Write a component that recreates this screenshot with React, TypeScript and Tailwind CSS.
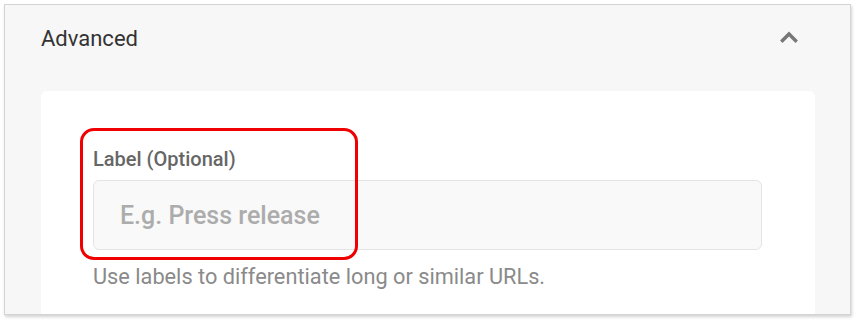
export default function App() {
  return (
    <div className="relative h-[320px] w-[856px] bg-white p-1 font-['Roboto',sans-serif]">
      {/* Panel "Advanced" */}
      <div className="h-[311px] w-[847px] overflow-hidden border border-[#d4d4d4] bg-[#f7f7f7] shadow-[1px_2px_3px_rgba(0,0,0,0.18)]">
        <div className="flex h-[86px] items-start justify-between pl-[36px] pr-[52px] pt-[20px]">
          <h2 className="text-[22px] leading-[28px] font-normal text-[#333]">Advanced</h2>
          <svg
            viewBox="0 0 18 13"
            className="mt-[5px] h-[13px] w-[18px] text-[#777]"
            fill="none"
            stroke="currentColor"
            strokeWidth="3.4"
            strokeLinecap="square"
          >
            <polyline points="2.5,10.5 9,4 15.5,10.5" />
          </svg>
        </div>

        <div className="ml-[36px] w-[774px] rounded-t-[6px] bg-white pl-[52px] pr-[53px] pt-[56px] pb-6">
          <label className="block text-[20px] leading-[24px] font-medium text-[#666]">
            Label (Optional)
          </label>
          <input
            type="text"
            placeholder="E.g. Press release"
            className="mt-[9px] h-[70px] w-full rounded-[6px] border border-[#e4e4e4] bg-[#f9f9f9] px-[26px] text-[25px] font-medium text-[#333] outline-none placeholder:text-[#acacac]"
          />
          <p className="mt-[13px] text-[21.75px] leading-[28px] text-[#8a8a8a]">
            Use labels to differentiate long or similar URLs.
          </p>
        </div>
      </div>

      {/* Annotation highlight */}
      <div className="pointer-events-none absolute left-[80px] top-[128px] h-[132px] w-[278px] rounded-[14px] border-[3px] border-[#f00000]" />
    </div>
  );
}
